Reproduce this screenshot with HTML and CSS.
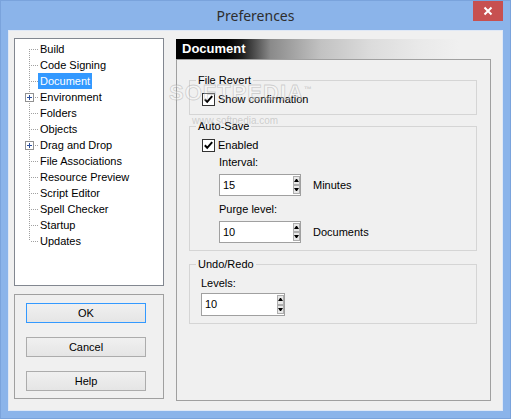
FILE: index.html
```html
<!DOCTYPE html>
<html>
<head>
<meta charset="utf-8">
<title>Preferences</title>
<link rel="stylesheet" href="styles.css">
</head>
<body>
<div class="window">
  <div class="titlebar">
    <div class="title">Preferences</div>
    <button class="close" aria-label="Close">
      <svg width="10" height="10" viewBox="0 0 10 10"><path d="M1.5 1.5 L8.5 8.5 M8.5 1.5 L1.5 8.5" stroke="#fff" stroke-width="2" fill="none"/></svg>
    </button>
  </div>
  <div class="client">
    <div class="left">
      <ul class="tree">
        <li class="node first"><span class="conn"></span><span class="label">Build</span></li>
        <li class="node"><span class="conn"></span><span class="label">Code Signing</span></li>
        <li class="node sel"><span class="conn"></span><span class="label">Document</span></li>
        <li class="node"><span class="conn"><svg class="plus" width="9" height="9" viewBox="0 0 9 9"><rect x="0.5" y="0.5" width="8" height="8" fill="#fff" stroke="#919191"/><rect x="2" y="4" width="5" height="1" fill="#2b4f9c"/><rect x="4" y="2" width="1" height="5" fill="#2b4f9c"/></svg></span><span class="label">Environment</span></li>
        <li class="node"><span class="conn"></span><span class="label">Folders</span></li>
        <li class="node"><span class="conn"></span><span class="label">Objects</span></li>
        <li class="node"><span class="conn"><svg class="plus" width="9" height="9" viewBox="0 0 9 9"><rect x="0.5" y="0.5" width="8" height="8" fill="#fff" stroke="#919191"/><rect x="2" y="4" width="5" height="1" fill="#2b4f9c"/><rect x="4" y="2" width="1" height="5" fill="#2b4f9c"/></svg></span><span class="label">Drag and Drop</span></li>
        <li class="node"><span class="conn"></span><span class="label">File Associations</span></li>
        <li class="node"><span class="conn"></span><span class="label">Resource Preview</span></li>
        <li class="node"><span class="conn"></span><span class="label">Script Editor</span></li>
        <li class="node"><span class="conn"></span><span class="label">Spell Checker</span></li>
        <li class="node"><span class="conn"></span><span class="label">Startup</span></li>
        <li class="node last"><span class="conn"></span><span class="label">Updates</span></li>
      </ul>
      <div class="btnpanel">
        <button class="btn default">OK</button>
        <button class="btn">Cancel</button>
        <button class="btn">Help</button>
      </div>
    </div>
    <div class="right">
      <div class="header">Document</div>
      <div class="page">
        <fieldset class="group g-revert">
          <legend>File Revert</legend>
          <label class="check">
            <svg width="13" height="13" viewBox="0 0 13 13"><rect x="0.5" y="0.5" width="12" height="12" fill="#fff" stroke="#333"/><path d="M2.8 6.3 L5.2 8.8 L10.2 3.2" fill="none" stroke="#000" stroke-width="2"/></svg>
            <span>Show confirmation</span>
          </label>
        </fieldset>
        <fieldset class="group g-auto">
          <legend>Auto-Save</legend>
          <label class="check">
            <svg width="13" height="13" viewBox="0 0 13 13"><rect x="0.5" y="0.5" width="12" height="12" fill="#fff" stroke="#333"/><path d="M2.8 6.3 L5.2 8.8 L10.2 3.2" fill="none" stroke="#000" stroke-width="2"/></svg>
            <span>Enabled</span>
          </label>
          <div class="field">
            <div class="flabel">Interval:</div>
            <div class="spinrow">
              <div class="spin"><span class="val">15</span><span class="arrows"><span class="up"></span><span class="down"></span></span></div>
              <span class="unit">Minutes</span>
            </div>
            <div class="flabel gap">Purge level:</div>
            <div class="spinrow">
              <div class="spin"><span class="val">10</span><span class="arrows"><span class="up"></span><span class="down"></span></span></div>
              <span class="unit">Documents</span>
            </div>
          </div>
        </fieldset>
        <fieldset class="group g-undo">
          <legend>Undo/Redo</legend>
          <div class="levels">
            <div class="flabel first">Levels:</div>
            <div class="spinrow tight">
              <div class="spin wide"><span class="val">10</span><span class="arrows"><span class="up"></span><span class="down"></span></span></div>
            </div>
          </div>
        </fieldset>
      </div>
    </div>
  </div>
  <div class="watermark">
    <span class="wm-big">SOFTPEDIA<sup>™</sup></span>
    <span class="wm-url">www.softpedia.com</span>
  </div>
</div>
</body>
</html>
```

FILE: styles.css
```css
* { box-sizing: border-box; }
html, body { margin: 0; padding: 0; }
body {
  background: #8bb4ea;
  font-family: "Liberation Sans", Arial, sans-serif;
  font-size: 11px;
  color: #000;
}
.window {
  position: relative;
  width: 511px;
  height: 419px;
  border: 1px solid #7aa3dc;
  background: #8bb4ea;
  display: flex;
  flex-direction: column;
  overflow: hidden;
}
.titlebar {
  flex: none;
  height: 29px;
  padding: 0 7px;
  display: grid;
  grid-template-columns: 1fr auto 1fr;
}
.title {
  grid-column: 2;
  font-family: "Noto Sans", "Open Sans", sans-serif;
  font-size: 14px;
  line-height: 29px;
  color: #2e2e2e;
}
.close {
  grid-column: 3;
  justify-self: end;
  align-self: start;
  margin-top: -1px;
  width: 30px;
  height: 21px;
  padding: 0;
  border: 0;
  background: #c75050;
  display: flex;
  align-items: center;
  justify-content: center;
}
.client {
  flex: none;
  height: 381px;
  margin: 0 7px;
  background: #f0f0f0;
  border: 1px solid #dfe8f6;
  padding: 7px 11px 0 5px;
  display: flex;
  gap: 12px;
}
.left {
  width: 150px;
  flex: none;
  display: flex;
  flex-direction: column;
  gap: 8px;
}
.tree {
  height: 248px;
  margin: 0;
  padding: 2px 0 0 0;
  list-style: none;
  background: #fff;
  border: 1px solid #828790;
}
.node {
  display: flex;
  align-items: center;
  height: 16px;
}
.conn {
  position: relative;
  flex: none;
  width: 23px;
  height: 16px;
}
.conn::before {
  content: "";
  position: absolute;
  left: 14px;
  top: 0;
  bottom: 0;
  width: 1px;
  background: repeating-linear-gradient(to bottom, #a0a0a0 0 1px, transparent 1px 2px);
}
.first .conn::before { top: 8px; }
.last .conn::before { bottom: 8px; }
.conn::after {
  content: "";
  position: absolute;
  left: 16px;
  top: 8px;
  width: 7px;
  height: 1px;
  background: repeating-linear-gradient(to right, #a0a0a0 0 1px, transparent 1px 2px);
}
.plus {
  position: absolute;
  left: 10px;
  top: 4px;
  z-index: 1;
  display: block;
}
.label {
  line-height: 16px;
  padding: 0 2px;
  white-space: nowrap;
}
.sel .label {
  background: #3399ff;
  color: #fff;
}
.btnpanel {
  height: 105px;
  border: 1px solid #a0a0a0;
  padding: 8px 0 0 11px;
  display: flex;
  flex-direction: column;
  gap: 14px;
}
.btn {
  width: 120px;
  height: 20px;
  padding: 0;
  border: 1px solid #acacac;
  background: linear-gradient(#f0f0f0, #e5e5e5);
  font-family: "Liberation Sans", Arial, sans-serif;
  font-size: 11px;
  color: #000;
}
.btn.default { border-color: #3399ff; }
.right {
  width: 315px;
  flex: none;
  padding-top: 1px;
  display: flex;
  flex-direction: column;
}
.header {
  height: 20px;
  line-height: 20px;
  padding-left: 6px;
  font-size: 13px;
  font-weight: bold;
  color: #fff;
  background: linear-gradient(to right, #000 0%, #000 16%, #1e1e1e 21%, #8a8a8a 30%, #c2c2c2 46%, #dcdcdc 62%, #e9e9e9 77%, #f0f0f0 90%);
}
.page {
  height: 342px;
  border: 1px solid #a0a0a0;
}
.group {
  margin: 0 13px 0 12px;
  min-width: 0;
  border: 1px solid #d5d5d5;
  padding: 6px 8px 7px 6px;
}
.group legend {
  padding: 0 2px;
  line-height: 13px;
  font-size: 11px;
}
.g-revert { margin-top: 14px; padding-bottom: 8px; }
.g-auto { margin-top: 5px; }
.g-undo { margin-top: 7px; }
.check {
  display: flex;
  align-items: center;
  gap: 3px;
  height: 13px;
  margin-left: 6px;
  line-height: 13px;
}
.check svg { display: block; flex: none; }
.field { margin-left: 23px; }
.levels { margin-left: 5px; }
.flabel {
  line-height: 13px;
  margin-top: 4px;
}
.flabel.gap { margin-top: 7px; }
.flabel.first { margin-top: 0; }
.spinrow {
  display: flex;
  align-items: center;
  margin-top: 5px;
}
.spinrow.tight { margin-top: 3px; }
.spin {
  display: flex;
  width: 82px;
  height: 22px;
  border: 1px solid #a0a0a0;
  background: #fff;
}
.spin.wide { width: 84px; height: 23px; }
.val {
  flex: 1;
  padding-left: 3px;
  line-height: 20px;
}
.spin.wide .val { line-height: 21px; }
.arrows {
  width: 7px;
  flex: none;
  padding: 1px 0;
  display: flex;
  flex-direction: column;
}
.arrows span {
  flex: 1;
  border: 1px solid #adadad;
  background: #e8e8e8;
  display: flex;
  align-items: center;
  justify-content: center;
}
.arrows span::after {
  content: "";
  width: 1px;
  height: 0;
  border-left: 2px solid transparent;
  border-right: 2px solid transparent;
}
.arrows .up::after { border-bottom: 3px solid #000; }
.arrows .down::after { border-top: 3px solid #000; }
.unit {
  margin-left: 12px;
  line-height: 13px;
}
.watermark {
  position: absolute;
  left: 168px;
  top: 78px;
  pointer-events: none;
}
.wm-big {
  display: block;
  font-family: "Liberation Sans", Arial, sans-serif;
  font-weight: bold;
  font-size: 22px;
  line-height: 22px;
  letter-spacing: 1px;
  color: rgba(255, 255, 255, 0.3);
  -webkit-text-stroke: 0.8px rgba(150, 150, 150, 0.4);
}
.wm-big sup {
  font-size: 8px;
  -webkit-text-stroke: 0;
  color: rgba(150, 150, 150, 0.4);
}
.wm-url {
  display: block;
  margin: 12px 0 0 23px;
  font-size: 10px;
  line-height: 10px;
  color: rgba(150, 150, 150, 0.4);
}
```
